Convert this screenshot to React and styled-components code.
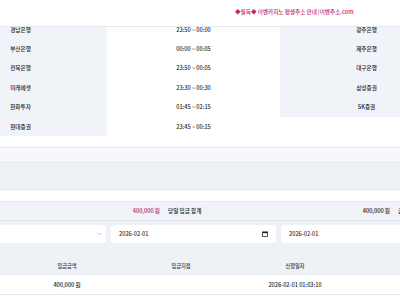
import React from "react";
import styled, { createGlobalStyle } from "styled-components";

const GlobalStyle = createGlobalStyle`
  html, body { margin: 0; padding: 0; background: #ffffff; }
  body {
    width: 400px;
    height: 300px;
    overflow: hidden;
    font-family: "Noto Sans CJK KR", "Noto Sans", sans-serif;
    font-size: 5.6px;
    font-weight: 500;
    color: #1b1f26;
  }
`;

const TopBar = styled.header`
  position: fixed;
  top: 0;
  left: 0;
  width: 400px;
  height: 27px;
  background: #ffffff;
  border-bottom: 1px solid #e3e7ee;
  z-index: 2;
  display: flex;
  align-items: center;
  padding-left: 235px;
  box-sizing: border-box;
`;

const Notice = styled.span`
  color: #c2286a;
  font-size: 5.6px;
  white-space: nowrap;
  padding-bottom: 2px;
`;

const Viewport = styled.div`
  width: 400px;
  overflow: hidden;
`;

const Canvas = styled.main`
  width: 692px;
  margin-left: -66px;
  padding-top: 20px;
`;

const BankGrid = styled.section`
  display: grid;
  grid-template-columns: repeat(4, 173px);
  grid-auto-rows: 19.4px;
`;

const Cell = styled.div`
  display: flex;
  align-items: center;
  justify-content: center;
  background: ${(p) => (p.$shade ? "#f0f3f8" : "transparent")};
  white-space: nowrap;
`;

const Spacer = styled.div`
  height: 11px;
`;

const Band = styled.div`
  height: ${(p) => p.$h}px;
  background: ${(p) => p.$bg};
  border-top: 1px solid #e2e7ef;
`;

const SummaryRow = styled.div`
  display: grid;
  grid-template-columns: repeat(3, 230px);
  height: 18px;
  background: #eff2f7;
  border-top: 1px solid #e2e7ef;
  border-bottom: 1px solid #e2e7ef;
`;

const SummaryGroup = styled.div`
  display: flex;
  align-items: center;
  justify-content: space-between;
  padding: 0 4px;
  white-space: nowrap;
`;

const Amount = styled.span`
  color: ${(p) => (p.$accent ? "#b0286a" : "#1b1f26")};
`;

const FilterBar = styled.div`
  display: flex;
  gap: 5px;
  padding: 4px 7px 13px;
  background: #eef2f7;
`;

const Field = styled.div`
  width: 165px;
  height: 18px;
  box-sizing: border-box;
  background: #ffffff;
  border-radius: 3px;
  display: flex;
  align-items: center;
  justify-content: space-between;
  padding: ${(p) => (p.$select ? "0 4px 0 8px" : "0 8px 0 8px")};
  color: #2c323b;
`;

const ListGrid = styled.div`
  display: grid;
  grid-template-columns: 76px 114px 114px 114px 1fr;
`;

const HeadCell = styled.div`
  height: 18px;
  display: flex;
  align-items: center;
  justify-content: center;
  background: #eef2f7;
  border-bottom: 1px solid #e2e7ef;
  color: #333944;
  font-size: 5.2px;
`;

const DataCell = styled.div`
  height: 19px;
  display: flex;
  align-items: center;
  justify-content: center;
  background: #ffffff;
  border-bottom: 1px solid #e2e7ef;
  white-space: nowrap;
`;

const Chevron = () => (
  <svg width="5" height="4" viewBox="0 0 5 4">
    <path d="M0.6 1 L2.5 2.9 L4.4 1" fill="none" stroke="#9aa1ab" strokeWidth="0.7" />
  </svg>
);

const CalendarIcon = () => (
  <svg width="6" height="6" viewBox="0 0 6 6">
    <rect x="0.6" y="0.9" width="4.8" height="4.5" fill="none" stroke="#222" strokeWidth="0.8" />
    <rect x="0.6" y="0.9" width="4.8" height="1.3" fill="#222" />
  </svg>
);

const banks = [
  ["경남은행", "23:50 ~ 00:00", "광주은행"],
  ["부산은행", "00:00 ~ 00:05", "제주은행"],
  ["전북은행", "23:50 ~ 00:05", "대구은행"],
  ["미래에셋", "23:30 ~ 00:30", "삼성증권"],
  ["한화투자", "01:45 ~ 02:15", "SK증권"],
  ["현대증권", "23:45 ~ 00:15", null],
];

export default function App() {
  return (
    <>
      <GlobalStyle />
      <TopBar>
        <Notice>◆필독◆ 이벤카지노 평생주소 안내 |이벤주소.com</Notice>
      </TopBar>
      <Viewport>
        <Canvas>
          <BankGrid>
            {banks.map((r, i) => (
              <React.Fragment key={i}>
                <Cell $shade>{r[0]}</Cell>
                <Cell>{r[1]}</Cell>
                <Cell $shade={!!r[2]}>{r[2]}</Cell>
                <Cell />
              </React.Fragment>
            ))}
          </BankGrid>
          <Spacer />
          <Band $h={14} $bg="#f6f8fb" />
          <Band $h={26} $bg="#eef2f7" />
          <Band $h={11} $bg="#ffffff" />
          <SummaryRow>
            <SummaryGroup>
              <span />
              <Amount $accent>400,000 원</Amount>
            </SummaryGroup>
            <SummaryGroup>
              <span>당일 입금 합계</span>
              <Amount>400,000 원</Amount>
            </SummaryGroup>
            <SummaryGroup>
              <span>금</span>
            </SummaryGroup>
          </SummaryRow>
          <FilterBar>
            <Field $select>
              <span />
              <Chevron />
            </Field>
            <Field>
              <span>2026-02-01</span>
              <CalendarIcon />
            </Field>
            <Field>
              <span>2026-02-01</span>
            </Field>
          </FilterBar>
          <ListGrid>
            <HeadCell />
            <HeadCell>입금금액</HeadCell>
            <HeadCell>입금지점</HeadCell>
            <HeadCell>신청일자</HeadCell>
            <HeadCell />
            <DataCell />
            <DataCell>400,000 원</DataCell>
            <DataCell></DataCell>
            <DataCell>2026-02-01 01:03:10</DataCell>
            <DataCell />
          </ListGrid>
        </Canvas>
      </Viewport>
    </>
  );
}
